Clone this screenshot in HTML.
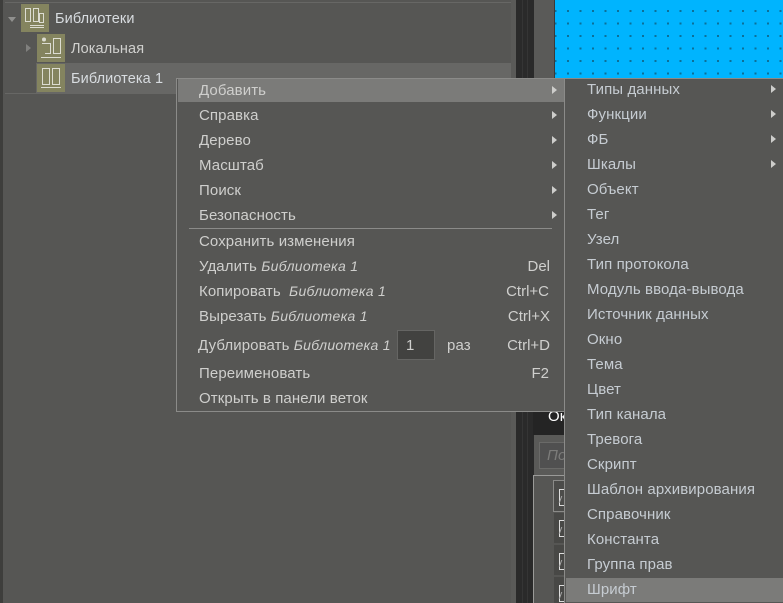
<!DOCTYPE html>
<html lang="ru"><head><meta charset="utf-8"><style>
html,body{margin:0;padding:0;width:783px;height:603px;overflow:hidden}
#w{position:relative;width:783px;height:603px;overflow:hidden;background:#565654;font-family:"Liberation Sans",sans-serif;font-size:15px;color:#cfcfcd}
.a{position:absolute}
.t{position:absolute;white-space:nowrap;line-height:20px;letter-spacing:.1px}
.t i{font-size:14px;letter-spacing:.3px}
.r{position:absolute;white-space:nowrap;line-height:20px;text-align:right}
.arr{position:absolute;width:0;height:0;border-left:5px solid #cdcdcb;border-top:4.5px solid transparent;border-bottom:4.5px solid transparent}
.s{color:#c6ccd2}
.l{font-size:14.500px}
.c{position:absolute;left:559px;width:4px;height:15px;border:1px solid #ddd}
.c:after{content:"";position:absolute;left:0;top:6px;width:4px;height:7px;border-left:1px solid #aaa;transform:skewX(-20deg)}
</style></head><body><div id="w">
<div class="a" style="left:0;top:0;width:3px;height:603px;background:#3e3e3c"></div>
<div class="a" style="left:5px;top:2px;width:506px;height:1px;background:#676765"></div>
<div class="a" style="left:5px;top:93px;width:506px;height:1px;background:#676765"></div>
<div class="a" style="left:36px;top:63px;width:475px;height:30px;background:#676765"></div>
<div class="a" style="left:511px;top:0;width:5px;height:603px;background:#5a5a58"></div>
<div class="a" style="left:516px;top:0;width:18px;height:603px;background:linear-gradient(90deg,#2a2a2a 0 6px,#353535 6px 7px,#2a2a2a 7px 11px,#353535 11px 12px,#2a2a2a 12px)"></div>
<div class="a" style="left:534px;top:0;width:21px;height:78px;background:#5a5a58;border-right:1px solid #3a3a3a;box-sizing:border-box"></div>

<svg class="a" style="left:555px;top:0" width="228" height="78"><defs><pattern id="d" x="12" y="10" width="12.5" height="12.5" patternUnits="userSpaceOnUse"><rect width="2" height="2" fill="#0c6f98"/></pattern></defs><rect width="228" height="78" fill="#00b4fe"/><rect width="228" height="78" fill="url(#d)"/></svg>

<div class="a" style="left:533px;top:411px;width:32px;height:24px;background:#242424"></div>
<div class="t" style="left:548px;top:407px;color:#fff">Ок</div>
<div class="a" style="left:534px;top:435px;width:31px;height:168px;background:#5a5a58"></div>
<div class="a" style="left:539px;top:442px;width:30px;height:25px;border:1px solid #6a6a68;background:#505050"></div>
<div class="t" style="left:547px;top:446px;color:#7c7c7a;font-style:italic">По</div>
<div class="a" style="left:533px;top:475px;width:40px;height:130px;border:1px solid #9a9a98;background:#565654"></div>
<div class="a" style="left:553px;top:480px;width:14px;height:30px;border:1px solid #8a8a88;background:#4c4c4a"></div>
<div class="a" style="left:554px;top:513px;width:11px;height:30px;background:#484846"></div>
<div class="a" style="left:554px;top:545px;width:11px;height:30px;background:#484846"></div>
<div class="a" style="left:554px;top:577px;width:11px;height:26px;background:#484846"></div>
<div class="c" style="top:489px"></div>
<div class="c" style="top:520px"></div>
<div class="c" style="top:553px"></div>
<div class="c" style="top:585px"></div>

<div class="a" style="left:8px;top:17px;border-top:5px solid #90908e;border-left:4.5px solid transparent;border-right:4.5px solid transparent"></div>
<div class="a" style="left:26px;top:44px;border-left:5px solid #80807e;border-top:4.5px solid transparent;border-bottom:4.500px solid transparent"></div>

<svg class="a" style="left:21px;top:4px" width="28" height="28"><rect width="28" height="28" fill="#84845f"/><g fill="none" stroke="#dcdcd2"><rect x="4.500" y="4.500" width="5" height="13"/><rect x="12.500" y="4.500" width="5" height="13"/><rect x="18.500" y="9.500" width="4" height="9"/><path d="M9 21.500H23M9 23.500H23"/></g></svg>
<svg class="a" style="left:37px;top:34px" width="28" height="28"><rect width="28" height="28" fill="#84845f"/><g fill="none" stroke="#dcdcd2"><path d="M5 9.500H13.500V19.500H8M4 23.500H24"/><circle cx="7" cy="5.500" r="1.500" fill="#dcdcd2"/><rect x="16.500" y="4.500" width="7" height="15"/></g></svg>
<svg class="a" style="left:37px;top:64px" width="28" height="28"><rect width="28" height="28" fill="#84845f"/><g fill="none" stroke="#dcdcd2"><rect x="5.500" y="4.500" width="7" height="16"/><rect x="15.500" y="4.500" width="7" height="16"/><path d="M4 23.500H24"/></g></svg>

<div class="t l" style="left:55px;top:9px;color:#d8dce0">Библиотеки</div>
<div class="t l" style="left:71px;top:39px;color:#d0d0ce">Локальная</div>
<div class="t l" style="left:71px;top:69px;color:#d8dce0">Библиотека 1</div>

<div class="a" style="left:176px;top:78px;width:389px;height:332px;background:#565654;border:1px solid #8b8b89"></div>
<div class="a" style="left:178px;top:79px;width:386px;height:23px;background:#7b7b79"></div>
<div class="t" style="left:199px;top:81px">Добавить</div>
<div class="t" style="left:199px;top:106px">Справка</div>
<div class="t" style="left:199px;top:131px">Дерево</div>
<div class="t" style="left:199px;top:156px">Масштаб</div>
<div class="t" style="left:199px;top:181px">Поиск</div>
<div class="t" style="left:199px;top:206px">Безопасность</div>
<div class="arr" style="left:552px;top:86px"></div>
<div class="arr" style="left:552px;top:111px"></div>
<div class="arr" style="left:552px;top:136px"></div>
<div class="arr" style="left:552px;top:161px"></div>
<div class="arr" style="left:552px;top:186px"></div>
<div class="arr" style="left:552px;top:211px"></div>
<div class="a" style="left:189px;top:228px;width:363px;height:1px;background:#8b8b89"></div>
<div class="t" style="left:199px;top:232px">Сохранить изменения</div>
<div class="t" style="left:199px;top:256px">Удалить <i>Библиотека 1</i></div>
<div class="t" style="left:199px;top:281px">Копировать <i style="margin-left:4px">Библиотека 1</i></div>
<div class="t" style="left:199px;top:306px">Вырезать <i>Библиотека 1</i></div>
<div class="t" style="left:198px;top:335px">Дублировать <i>Библиотека 1</i></div>
<div class="a" style="left:397px;top:330px;width:36px;height:28px;background:#424240;border:1px solid #656563"></div>
<div class="t" style="left:406px;top:336px">1</div>
<div class="t" style="left:447px;top:336px">раз</div>
<div class="t" style="left:199px;top:364px">Переименовать</div>
<div class="t" style="left:199px;top:389px">Открыть в панели веток</div>
<div class="r" style="right:233px;top:257px">Del</div>
<div class="r" style="right:234px;top:282px">Ctrl+C</div>
<div class="r" style="right:233px;top:307px">Ctrl+X</div>
<div class="r" style="right:233px;top:336px">Ctrl+D</div>
<div class="r" style="right:234px;top:364px">F2</div>

<div class="a" style="left:564px;top:78px;width:219px;height:525px;background:#565654;border-left:1px solid #8b8b89;border-top:1px solid #8b8b89;box-sizing:border-box"></div>
<div class="a" style="left:566px;top:578px;width:217px;height:24px;background:#7b7b79"></div>
<div class="t s" style="left:587px;top:80px">Типы данных</div>
<div class="t s" style="left:587px;top:105px">Функции</div>
<div class="t s" style="left:587px;top:130px">ФБ</div>
<div class="t s" style="left:587px;top:155px">Шкалы</div>
<div class="t s" style="left:587px;top:180px">Объект</div>
<div class="t s" style="left:587px;top:205px">Тег</div>
<div class="t s" style="left:587px;top:230px">Узел</div>
<div class="t s" style="left:587px;top:255px">Тип протокола</div>
<div class="t s" style="left:587px;top:280px">Модуль ввода-вывода</div>
<div class="t s" style="left:587px;top:305px">Источник данных</div>
<div class="t s" style="left:587px;top:330px">Окно</div>
<div class="t s" style="left:587px;top:355px">Тема</div>
<div class="t s" style="left:587px;top:380px">Цвет</div>
<div class="t s" style="left:587px;top:405px">Тип канала</div>
<div class="t s" style="left:587px;top:430px">Тревога</div>
<div class="t s" style="left:587px;top:455px">Скрипт</div>
<div class="t s" style="left:587px;top:480px">Шаблон архивирования</div>
<div class="t s" style="left:587px;top:505px">Справочник</div>
<div class="t s" style="left:587px;top:530px">Константа</div>
<div class="t s" style="left:587px;top:555px">Группа прав</div>
<div class="t s" style="left:587px;top:580px">Шрифт</div>
<div class="arr" style="left:771px;top:85px"></div>
<div class="arr" style="left:771px;top:110px"></div>
<div class="arr" style="left:771px;top:135px"></div>
<div class="arr" style="left:771px;top:160px"></div>
</div></body></html>
